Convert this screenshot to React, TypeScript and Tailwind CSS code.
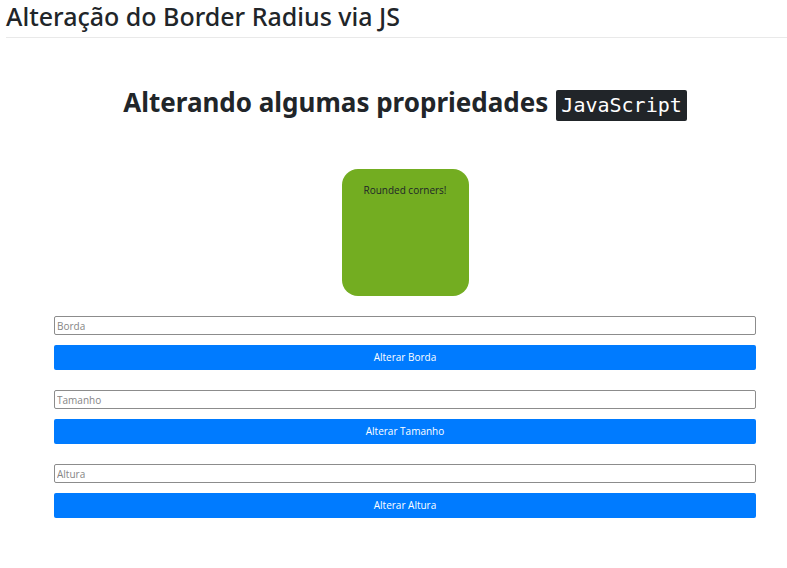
const fields = [
  { id: "borda", label: "Borda" },
  { id: "tamanho", label: "Tamanho" },
  { id: "altura", label: "Altura" },
];

export default function App() {
  return (
    <div className="bg-white pl-1.5 font-['Open_Sans',sans-serif] text-[#212529]">
      <h1 className="border-b border-[#e9e9e9] pb-[5px] font-['Noto_Sans',sans-serif] text-[25px] font-medium leading-8">
        Alteração do Border Radius via JS
      </h1>
      <main className="pl-12 pr-[31px] pt-[50px]">
        <h2 className="flex items-baseline justify-center gap-2 font-['Noto_Sans',sans-serif] text-[26px] font-bold leading-7">
          <span>Alterando algumas propriedades</span>
          <code className="rounded-xs bg-[#212529] px-[5px] font-['DejaVu_Sans_Mono',monospace] text-xl font-normal leading-[31px] text-white">
            JavaScript
          </code>
        </h2>
        <div className="mx-auto mt-12 h-[127px] w-[127px] rounded-2xl bg-[#73ad21] pt-[13px] text-center text-[10px] leading-4">
          Rounded corners!
        </div>
        <form className="mt-5 flex flex-col gap-5 text-[10px]" onSubmit={(e) => e.preventDefault()}>
          {fields.map((f) => (
            <div key={f.id} className="flex flex-col gap-2.5">
              <input
                id={f.id}
                aria-label={f.label}
                placeholder={f.label}
                className="h-[19px] w-full rounded-xs border border-[#8c8c8c] px-0.5 placeholder:text-[#858585]"
              />
              <button type="submit" className="h-[25px] w-full rounded-xs bg-[#007bff] text-white">
                Alterar {f.label}
              </button>
            </div>
          ))}
        </form>
      </main>
    </div>
  );
}
